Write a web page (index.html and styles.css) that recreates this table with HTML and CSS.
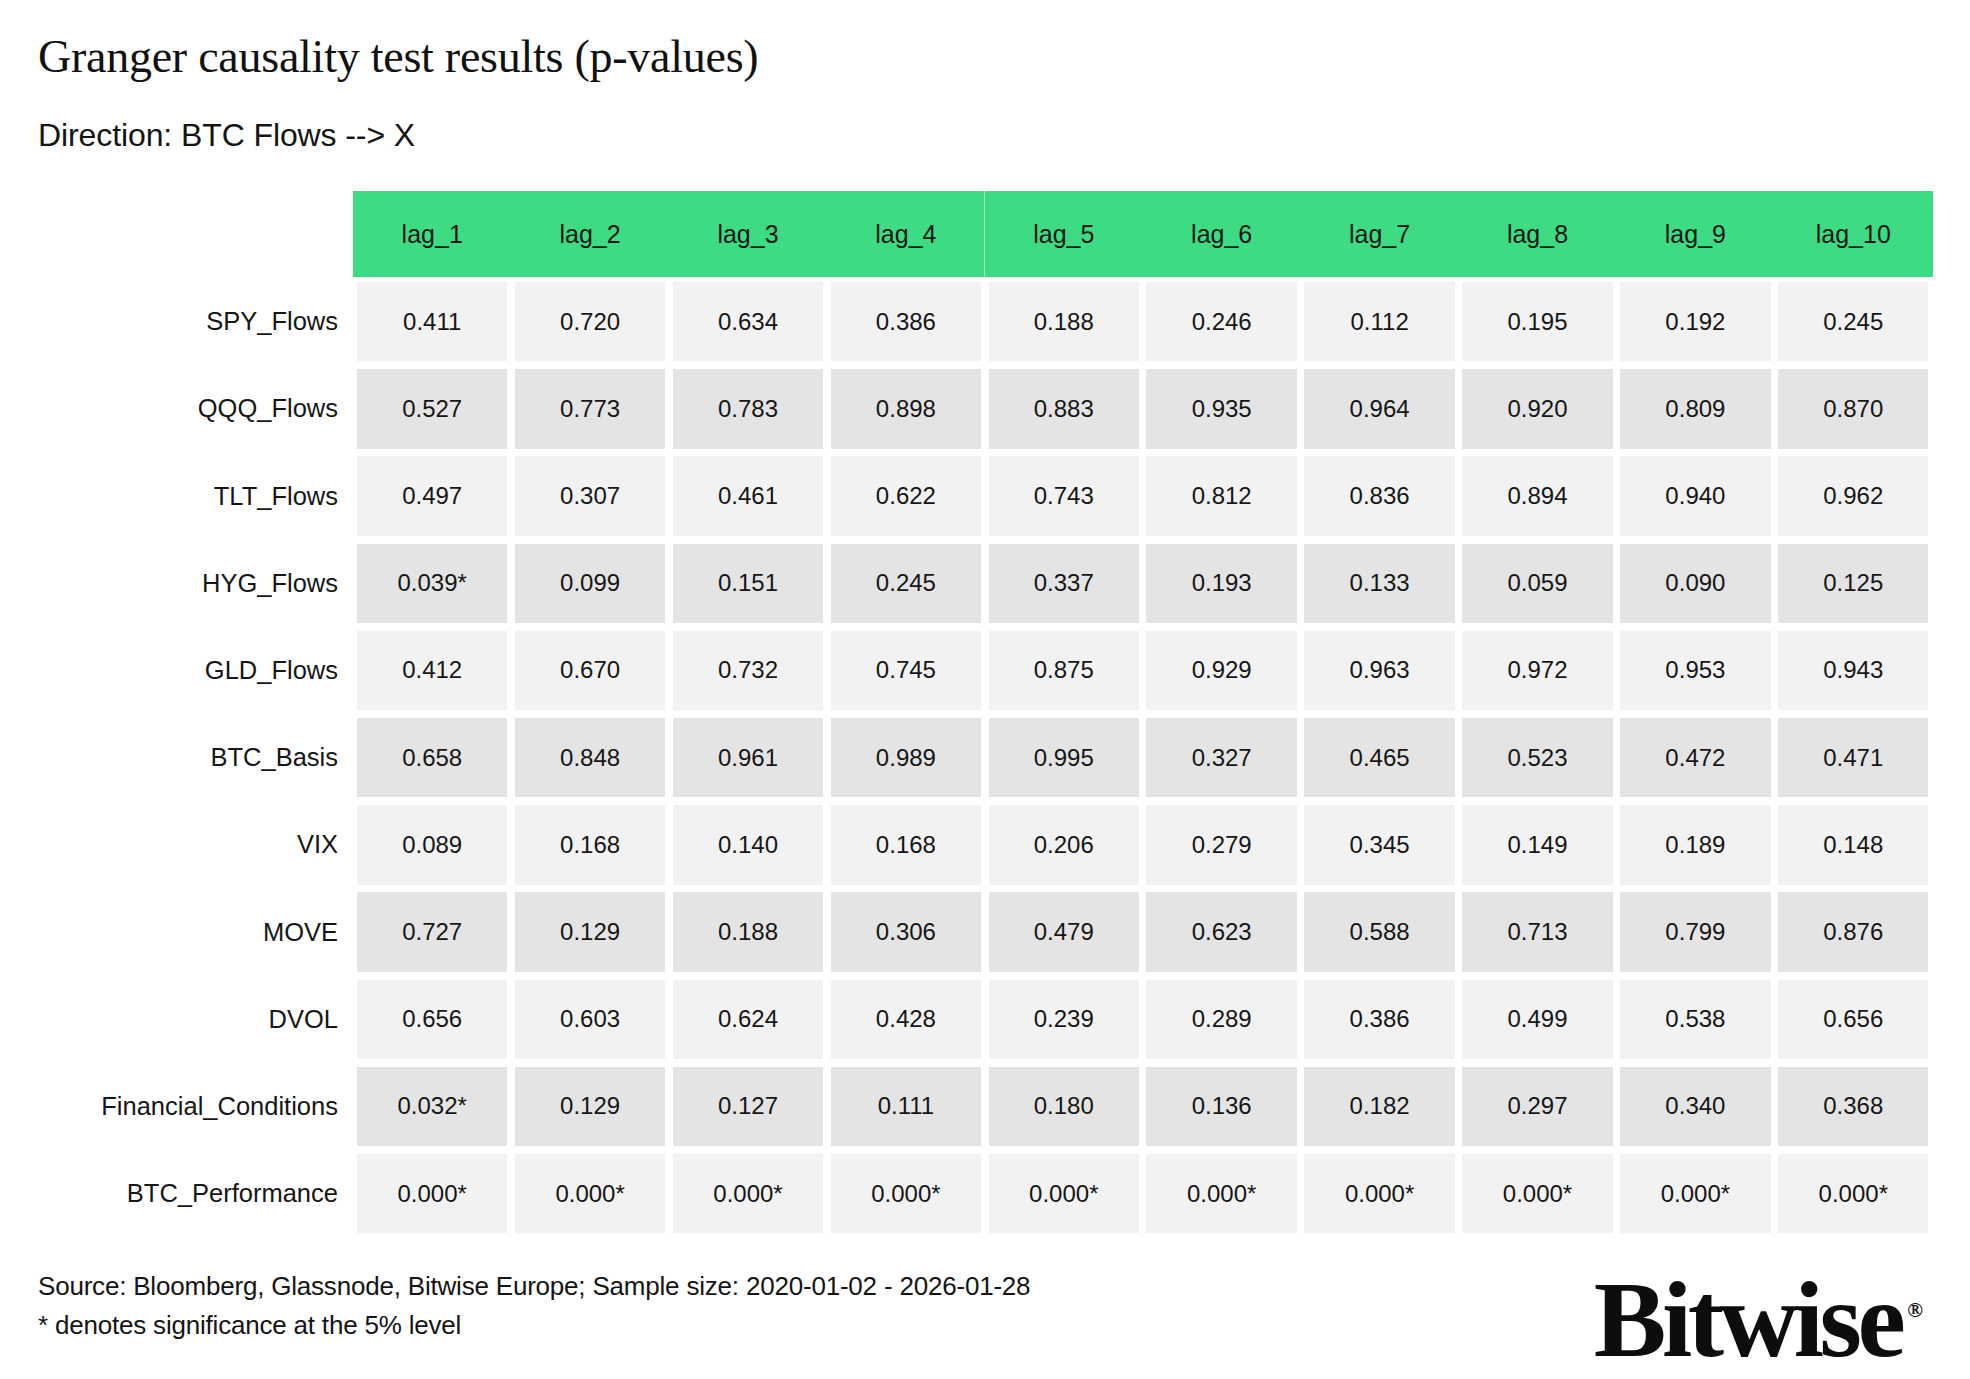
FILE: index.html
```html
<!DOCTYPE html>
<html lang="en">
<head>
<meta charset="utf-8">
<title>Granger causality test results (p-values)</title>
<link rel="stylesheet" href="styles.css">
</head>
<body>
<div class="page">
  <h1 class="title">Granger causality test results (p-values)</h1>
  <p class="subtitle">Direction: BTC Flows --&gt; X</p>

  <div class="thead">
    <div class="corner"></div>
    <div class="hbar">
      <div class="hcell">lag_1</div>
      <div class="hcell">lag_2</div>
      <div class="hcell">lag_3</div>
      <div class="hcell">lag_4</div>
      <div class="hcell split">lag_5</div>
      <div class="hcell">lag_6</div>
      <div class="hcell">lag_7</div>
      <div class="hcell">lag_8</div>
      <div class="hcell">lag_9</div>
      <div class="hcell">lag_10</div>
    </div>
  </div>

  <div class="tbody">
    <div class="lbl">SPY_Flows</div>
    <div class="c">0.411</div><div class="c">0.720</div><div class="c">0.634</div><div class="c">0.386</div><div class="c">0.188</div><div class="c">0.246</div><div class="c">0.112</div><div class="c">0.195</div><div class="c">0.192</div><div class="c">0.245</div>

    <div class="lbl">QQQ_Flows</div>
    <div class="c d">0.527</div><div class="c d">0.773</div><div class="c d">0.783</div><div class="c d">0.898</div><div class="c d">0.883</div><div class="c d">0.935</div><div class="c d">0.964</div><div class="c d">0.920</div><div class="c d">0.809</div><div class="c d">0.870</div>

    <div class="lbl">TLT_Flows</div>
    <div class="c">0.497</div><div class="c">0.307</div><div class="c">0.461</div><div class="c">0.622</div><div class="c">0.743</div><div class="c">0.812</div><div class="c">0.836</div><div class="c">0.894</div><div class="c">0.940</div><div class="c">0.962</div>

    <div class="lbl">HYG_Flows</div>
    <div class="c d">0.039*</div><div class="c d">0.099</div><div class="c d">0.151</div><div class="c d">0.245</div><div class="c d">0.337</div><div class="c d">0.193</div><div class="c d">0.133</div><div class="c d">0.059</div><div class="c d">0.090</div><div class="c d">0.125</div>

    <div class="lbl">GLD_Flows</div>
    <div class="c">0.412</div><div class="c">0.670</div><div class="c">0.732</div><div class="c">0.745</div><div class="c">0.875</div><div class="c">0.929</div><div class="c">0.963</div><div class="c">0.972</div><div class="c">0.953</div><div class="c">0.943</div>

    <div class="lbl">BTC_Basis</div>
    <div class="c d">0.658</div><div class="c d">0.848</div><div class="c d">0.961</div><div class="c d">0.989</div><div class="c d">0.995</div><div class="c d">0.327</div><div class="c d">0.465</div><div class="c d">0.523</div><div class="c d">0.472</div><div class="c d">0.471</div>

    <div class="lbl">VIX</div>
    <div class="c">0.089</div><div class="c">0.168</div><div class="c">0.140</div><div class="c">0.168</div><div class="c">0.206</div><div class="c">0.279</div><div class="c">0.345</div><div class="c">0.149</div><div class="c">0.189</div><div class="c">0.148</div>

    <div class="lbl">MOVE</div>
    <div class="c d">0.727</div><div class="c d">0.129</div><div class="c d">0.188</div><div class="c d">0.306</div><div class="c d">0.479</div><div class="c d">0.623</div><div class="c d">0.588</div><div class="c d">0.713</div><div class="c d">0.799</div><div class="c d">0.876</div>

    <div class="lbl">DVOL</div>
    <div class="c">0.656</div><div class="c">0.603</div><div class="c">0.624</div><div class="c">0.428</div><div class="c">0.239</div><div class="c">0.289</div><div class="c">0.386</div><div class="c">0.499</div><div class="c">0.538</div><div class="c">0.656</div>

    <div class="lbl">Financial_Conditions</div>
    <div class="c d">0.032*</div><div class="c d">0.129</div><div class="c d">0.127</div><div class="c d">0.111</div><div class="c d">0.180</div><div class="c d">0.136</div><div class="c d">0.182</div><div class="c d">0.297</div><div class="c d">0.340</div><div class="c d">0.368</div>

    <div class="lbl">BTC_Performance</div>
    <div class="c">0.000*</div><div class="c">0.000*</div><div class="c">0.000*</div><div class="c">0.000*</div><div class="c">0.000*</div><div class="c">0.000*</div><div class="c">0.000*</div><div class="c">0.000*</div><div class="c">0.000*</div><div class="c">0.000*</div>
  </div>

  <div class="footer">
    <div class="notes">
      <p class="note">Source: Bloomberg, Glassnode, Bitwise Europe; Sample size: 2020-01-02 - 2026-01-28</p>
      <p class="note">* denotes significance at the 5% level</p>
    </div>
    <div class="logo">Bitwise<span class="reg">®</span></div>
  </div>
</div>
</body>
</html>
```

FILE: styles.css
```css
* { box-sizing: border-box; }

html, body {
  margin: 0;
  padding: 0;
  background: #ffffff;
}

body {
  width: 1970px;
  height: 1379px;
  overflow: hidden;
  color: #141414;
  font-family: "Liberation Sans", Arial, sans-serif;
}

.page {
  padding: 33.8px 41.5px 0 38px;
}

.title {
  margin: 0;
  font-family: "Liberation Serif", "Times New Roman", serif;
  font-weight: normal;
  font-size: 46px;
  line-height: 46px;
  height: 46px;
  letter-spacing: -0.25px;
  color: #111;
}

.subtitle {
  margin: 39.5px 0 0 0;
  font-size: 32px;
  line-height: 32px;
  height: 32px;
  letter-spacing: -0.1px;
  color: #151515;
}

.thead,
.tbody {
  display: grid;
  grid-template-columns: 311.5px repeat(10, 1fr);
  column-gap: 7.5px;
}

.thead {
  margin-top: 39.5px;
  height: 86.7px;
}

.hbar {
  grid-column: 2 / -1;
  margin: 0 -4px;
  padding: 0 4px;
  background: #3ddc84;
  display: grid;
  grid-template-columns: repeat(10, 1fr);
  column-gap: 7.5px;
}

.hcell {
  position: relative;
  display: flex;
  align-items: center;
  justify-content: center;
  font-size: 25px;
  color: #161616;
}

.hcell.split::before {
  content: "";
  position: absolute;
  left: -4.5px;
  top: 0;
  bottom: 0;
  width: 1px;
  background: rgba(255, 255, 255, 0.55);
}

.tbody {
  margin-top: 4.6px;
  grid-auto-rows: 79.3px;
  row-gap: 7.9px;
}

.lbl {
  display: flex;
  align-items: center;
  justify-content: flex-end;
  padding-right: 11.5px;
  font-size: 25.5px;
  color: #161616;
  white-space: nowrap;
}

.c {
  display: flex;
  align-items: center;
  justify-content: center;
  background: #f2f2f2;
  font-size: 24px;
  color: #161616;
}

.c.d {
  background: #e4e4e4;
}

.footer {
  margin-top: 33.5px;
  display: flex;
  justify-content: space-between;
  align-items: flex-start;
}

.note {
  margin: 0;
  font-size: 26px;
  line-height: 39px;
  letter-spacing: -0.2px;
  color: #141414;
}

.logo {
  margin-top: 3.4px;
  margin-right: 5.5px;
  font-family: "Liberation Serif", "Times New Roman", serif;
  font-weight: bold;
  font-size: 109px;
  line-height: 100px;
  height: 100px;
  letter-spacing: -4.5px;
  color: #0d0d0d;
}

.reg {
  font-size: 21px;
  line-height: 1;
  letter-spacing: 0;
  margin-left: 6px;
  vertical-align: 39.5px;
  font-weight: bold;
}
```
